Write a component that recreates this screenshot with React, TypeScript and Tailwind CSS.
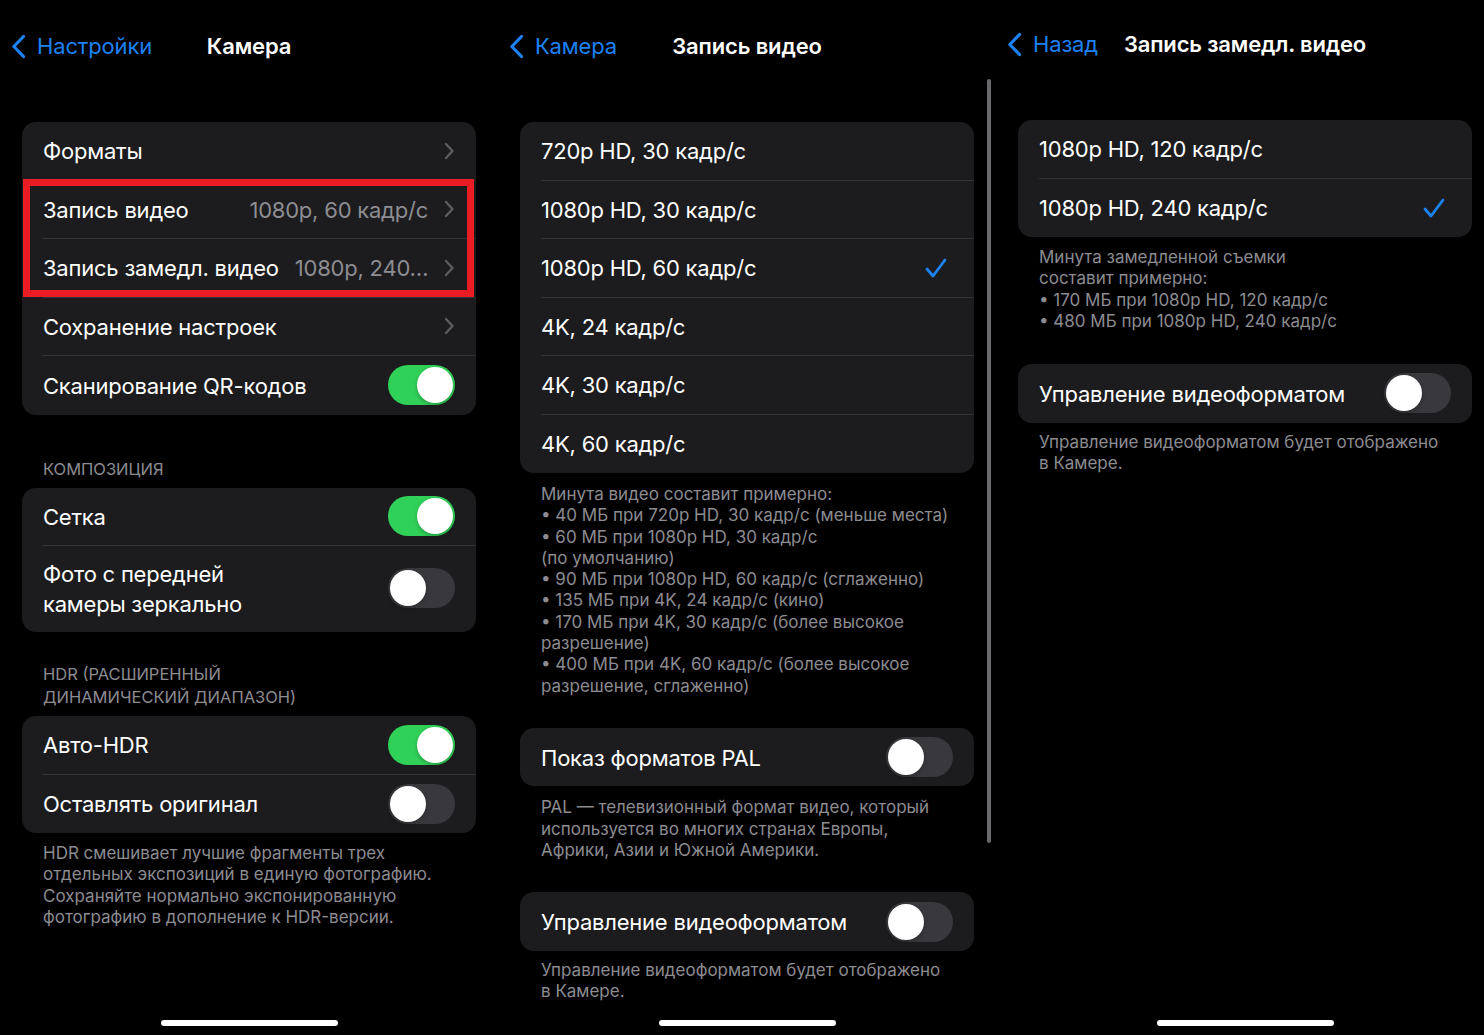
import React from 'react'

const font = { fontFamily: 'Inter, "Noto Sans", sans-serif' }

function BackChevron() {
  return (
    <svg width="15" height="25" viewBox="0 0 15 25" fill="none">
      <path d="M12.5 2.5 L2.8 12.5 L12.5 22.5" stroke="#1c82f5" strokeWidth="3.2" strokeLinecap="round" strokeLinejoin="round" />
    </svg>
  )
}

function Chevron() {
  return (
    <svg width="11" height="18" viewBox="0 0 11 18" fill="none">
      <path d="M2 2 L8.5 9 L2 16" stroke="#5c5c60" strokeWidth="2.4" strokeLinecap="round" strokeLinejoin="round" />
    </svg>
  )
}

function Check() {
  return (
    <svg width="22" height="20" viewBox="0 0 22 20" fill="none">
      <path d="M2 11 L8 18 L20 2" stroke="#1c82f5" strokeWidth="2.8" strokeLinecap="round" strokeLinejoin="round" />
    </svg>
  )
}

function Toggle({ on }: { on?: boolean }) {
  return (
    <div
      className={
        on
          ? 'relative h-[40px] w-[67px] shrink-0 rounded-full bg-[#30d158]'
          : 'relative h-[40px] w-[67px] shrink-0 rounded-full bg-[#39393d]'
      }
    >
      <div
        className={
          on
            ? 'absolute top-[2px] right-[2px] h-[36px] w-[36px] rounded-full bg-white shadow-[0_2px_4px_rgba(0,0,0,0.25)]'
            : 'absolute top-[2px] left-[2px] h-[36px] w-[36px] rounded-full bg-white shadow-[0_2px_4px_rgba(0,0,0,0.25)]'
        }
      />
    </div>
  )
}

function NavBar({ back, title }: { back: string; title: string }) {
  return (
    <div className="grid h-[32px] grid-cols-[1fr_auto_1fr] items-center tracking-[-0.01em]">
      <div className="flex items-center gap-[11px] pl-[11px] text-[22px] text-[#1c82f5]">
        <BackChevron />
        <span>{back}</span>
      </div>
      <div className="text-[22px] font-semibold text-white">{title}</div>
      <div />
    </div>
  )
}

type RowProps = {
  label: React.ReactNode
  value?: string
  chevron?: boolean
  toggle?: 'on' | 'off'
  check?: boolean
  last?: boolean
  tall?: boolean
}

function Row({ label, value, chevron, toggle, check, last, tall }: RowProps) {
  return (
    <div className="flex pl-[21px]">
      <div
        className={
          (tall ? 'pt-[11px] pb-[13px] leading-[30px] ' : 'h-[58.5px] ') +
          'flex flex-1 items-center justify-between gap-4 pr-[21px] ' +
          (last ? '' : 'border-b border-[#333336]')
        }
      >
        <div className="pt-[2px] text-[22px] tracking-[-0.01em] whitespace-nowrap text-white">{label}</div>
        <div className="flex items-center gap-[16px]">
          {value && <span className="pt-[2px] text-[22px] tracking-[-0.01em] whitespace-nowrap text-[#8d8d92]">{value}</span>}
          {chevron && <Chevron />}
          {toggle && <Toggle on={toggle === 'on'} />}
          {check && (
            <span className="pr-[6px]">
              <Check />
            </span>
          )}
        </div>
      </div>
    </div>
  )
}

function Card({ children, className = '' }: { children: React.ReactNode; className?: string }) {
  return <div className={'relative mx-[22px] rounded-[14px] bg-[#1c1c1e] ' + className}>{children}</div>
}

function Footer({ children, className = '' }: { children: React.ReactNode; className?: string }) {
  return <div className={'px-[43px] text-[17px] leading-[21.3px] text-[#8c8c91] ' + className}>{children}</div>
}

function Header({ children, className = '' }: { children: React.ReactNode; className?: string }) {
  return <div className={'px-[43px] text-[16.5px] leading-[23px] text-[#8c8c91] uppercase ' + className}>{children}</div>
}

function HomeBar() {
  return <div className="mx-auto mt-auto mb-[9px] h-[6px] w-[177px] rounded-full bg-white" />
}

function CameraPanel() {
  return (
    <div className="flex h-[1035px] w-[498px] shrink-0 flex-col pt-[30px]">
      <NavBar back="Настройки" title="Камера" />
      <Card className="mt-[60px]">
        <Row label="Форматы" chevron />
        <Row label="Запись видео" value="1080p, 60 кадр/с" chevron />
        <Row label="Запись замедл. видео" value="1080p, 240…" chevron />
        <Row label="Сохранение настроек" chevron />
        <Row label="Сканирование QR-кодов" toggle="on" last />
        <div className="pointer-events-none absolute top-[57px] right-[2px] left-[1px] h-[118px] border-[7px] border-[#ec1c24]" />
      </Card>
      <Header className="mt-[43px] mb-[7px]">Композиция</Header>
      <Card>
        <Row label="Сетка" toggle="on" />
        <Row
          tall
          label={
            <>
              Фото с передней
              <br />
              камеры зеркально
            </>
          }
          toggle="off"
          last
        />
      </Card>
      <Header className="mt-[31px] mb-[7px]">
        HDR (расширенный
        <br />
        динамический диапазон)
      </Header>
      <Card>
        <Row label="Авто-HDR" toggle="on" />
        <Row label="Оставлять оригинал" toggle="off" last />
      </Card>
      <Footer className="pt-[10px]">
        HDR смешивает лучшие фрагменты трех
        <br />
        отдельных экспозиций в единую фотографию.
        <br />
        Сохраняйте нормально экспонированную
        <br />
        фотографию в дополнение к HDR-версии.
      </Footer>
      <HomeBar />
    </div>
  )
}

function VideoPanel() {
  const rows = ['720p HD, 30 кадр/с', '1080p HD, 30 кадр/с', '1080p HD, 60 кадр/с', '4K, 24 кадр/с', '4K, 30 кадр/с', '4K, 60 кадр/с']
  return (
    <div className="relative flex h-[1035px] w-[498px] shrink-0 flex-col pt-[30px]">
      <NavBar back="Камера" title="Запись видео" />
      <Card className="mt-[60px]">
        {rows.map((r, i) => (
          <Row key={r} label={r} check={i === 2} last={i === rows.length - 1} />
        ))}
      </Card>
      <Footer className="pt-[11px]">
        Минута видео составит примерно:
        <br />• 40 МБ при 720p HD, 30 кадр/с (меньше места)
        <br />• 60 МБ при 1080p HD, 30 кадр/с
        <br />
        (по умолчанию)
        <br />• 90 МБ при 1080p HD, 60 кадр/с (сглаженно)
        <br />• 135 МБ при 4K, 24 кадр/с (кино)
        <br />• 170 МБ при 4K, 30 кадр/с (более высокое
        <br />
        разрешение)
        <br />• 400 МБ при 4K, 60 кадр/с (более высокое
        <br />
        разрешение, сглаженно)
      </Footer>
      <Card className="mt-[31px]">
        <Row label="Показ форматов PAL" toggle="off" last />
      </Card>
      <Footer className="pt-[11px]">
        PAL — телевизионный формат видео, который
        <br />
        используется во многих странах Европы,
        <br />
        Африки, Азии и Южной Америки.
      </Footer>
      <Card className="mt-[31px]">
        <Row label="Управление видеоформатом" toggle="off" last />
      </Card>
      <Footer className="pt-[9px]">
        Управление видеоформатом будет отображено
        <br />в Камере.
      </Footer>
      <HomeBar />
      <div className="absolute top-[79px] right-[5px] h-[764px] w-[4px] rounded-full bg-[#6a6a6e]" />
    </div>
  )
}

function SlowMoPanel() {
  return (
    <div className="flex h-[1035px] w-[498px] shrink-0 flex-col pt-[28px]">
      <NavBar back="Назад" title="Запись замедл. видео" />
      <Card className="mt-[60px]">
        <Row label="1080p HD, 120 кадр/с" />
        <Row label="1080p HD, 240 кадр/с" check last />
      </Card>
      <Footer className="pt-[10px]">
        Минута замедленной съемки
        <br />
        составит примерно:
        <br />• 170 МБ при 1080p HD, 120 кадр/с
        <br />• 480 МБ при 1080p HD, 240 кадр/с
      </Footer>
      <Card className="mt-[32px]">
        <Row label="Управление видеоформатом" toggle="off" last />
      </Card>
      <Footer className="pt-[9px]">
        Управление видеоформатом будет отображено
        <br />в Камере.
      </Footer>
      <HomeBar />
    </div>
  )
}

export default function App() {
  return (
    <div className="flex h-[1035px] w-[1484px] overflow-hidden bg-black" style={font}>
      <CameraPanel />
      <VideoPanel />
      <SlowMoPanel />
    </div>
  )
}
